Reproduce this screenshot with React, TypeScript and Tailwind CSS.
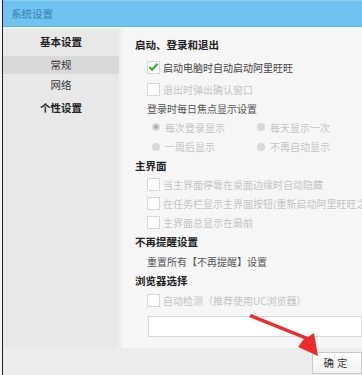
import React from 'react';

const font = { fontFamily: '"Noto Sans CJK SC", "Liberation Sans", sans-serif' };

function Check({ checked, label, disabled, h = 'h-[19px]' }: { checked?: boolean; label: string; disabled?: boolean; h?: string }) {
  return (
    <div className={`flex items-center ${h} pl-[12px] whitespace-nowrap`}>
      <span className="w-[13px] h-[13px] border border-[#d6d6d6] bg-white flex items-center justify-center shrink-0">
        {checked && (
          <svg width="12" height="10" viewBox="0 0 12 10">
            <path d="M1.5 5 L4.5 8 L10.5 1.5" stroke="#3aa63a" strokeWidth="2.4" fill="none" />
          </svg>
        )}
      </span>
      <span className={`ml-[3px] text-[10px] ${disabled ? 'text-[#c4c4c4]' : 'text-[#444]'}`}>{label}</span>
    </div>
  );
}

function Radio({ label, selected }: { label: string; selected?: boolean }) {
  return (
    <div className="flex items-center w-[114px] whitespace-nowrap">
      <span className="w-[8px] h-[8px] rounded-full bg-[#d8d8d8] flex items-center justify-center">
        {selected && <span className="w-[4px] h-[4px] rounded-full bg-[#a8a8a8]" />}
      </span>
      <span className="ml-[5px] text-[10px] text-[#c4c4c4]">{label}</span>
    </div>
  );
}

export default function App() {
  return (
    <div className="relative w-[362px] h-[375px] overflow-hidden bg-[#ececec] flex" style={font}>
      {/* window edge */}
      <div className="w-[2px] bg-[#f4f4f4]" />
      <div className="w-[1px] bg-[#222]" />
      <div className="flex-1 flex flex-col min-w-0">
        <div className="h-[27px] bg-[#6ec3f1] border-t border-[#8fcff2] border-b border-b-[#5db4e4] flex items-center pl-[8px] text-[10.5px] text-[#3b7fb0]">
          系统设置
        </div>
        <div className="h-[2px] bg-[#f2faf8]" />
        <div className="flex h-[319px]">
          <div className="w-[116px] bg-[#e8e8e8] flex flex-col pt-[2px]">
            <div className="h-[22px] flex items-center justify-center text-[10.5px] font-bold text-[#222]">基本设置</div>
            <div className="mt-[3px] h-[18px] bg-[#d9d9d9] flex items-center justify-center text-[10.5px] text-[#333]">常规</div>
            <div className="h-[22px] flex items-center justify-center text-[10.5px] text-[#333]">网络</div>
            <div className="h-[24px] flex items-center justify-center text-[10.5px] font-bold text-[#222]">个性设置</div>
          </div>
          <div className="w-[3px] bg-[#efefef]" />
          <div className="flex-1 bg-[#f6f6f6] pl-[13px] pt-[6px] min-w-0 overflow-hidden">
            <div className="h-[20px] flex items-center text-[10.5px] font-bold text-[#222]">启动、登录和退出</div>
            <div className="mt-[2px]">
              <Check checked h="h-[20px]" label="启动电脑时自动启动阿里旺旺" />
              <div className="mt-[2px]"><Check disabled h="h-[20px]" label="退出时弹出确认窗口" /></div>
            </div>
            <div className="h-[18px] flex items-center pl-[12px] text-[10px] text-[#555]">登录时每日焦点显示设置</div>
            <div className="pl-[17px] flex flex-col">
              <div className="h-[20px] flex items-center"><Radio selected label="每次登录显示" /><Radio label="每天显示一次" /></div>
              <div className="h-[19px] flex items-center"><Radio label="一周后显示" /><Radio label="不再自动显示" /></div>
            </div>
            <div className="h-[19px] flex items-center text-[10.5px] font-bold text-[#222]">主界面</div>
            <Check disabled label="当主界面停靠在桌面边缘时自动隐藏" />
            <Check disabled label="在任务栏显示主界面按钮(重新启动阿里旺旺之后生效)" />
            <Check disabled label="主界面总显示在最前" />
            <div className="h-[19px] flex items-center text-[10.5px] font-bold text-[#222]">不再提醒设置</div>
            <div className="h-[20px] flex items-center pl-[12px] text-[10px] text-[#555]">重置所有【不再提醒】设置</div>
            <div className="h-[20px] flex items-center text-[10.5px] font-bold text-[#222]">浏览器选择</div>
            <Check disabled label="自动检测（推荐使用UC浏览器）" />
            <div className="mt-[6px] ml-[13px] h-[21px] bg-white border border-[#d8d8d8]" />
          </div>
        </div>
        <div className="flex-1 flex justify-end items-end">
          <div className="w-[50px] h-[22px] mb-[1px] border border-[#c9c9c9] bg-gradient-to-b from-white to-[#f0f0f0] flex items-center justify-center text-[10.5px] text-[#333] tracking-[3px]">
            确定
          </div>
        </div>
      </div>
      {/* red arrow annotation */}
      <svg className="absolute left-0 top-0 pointer-events-none" width="362" height="375" viewBox="0 0 362 375">
        <polygon points="249,317 304,339 298,347 318,356 314,333 308,337 251,314" fill="#ee2b2b" />
      </svg>
    </div>
  );
}
